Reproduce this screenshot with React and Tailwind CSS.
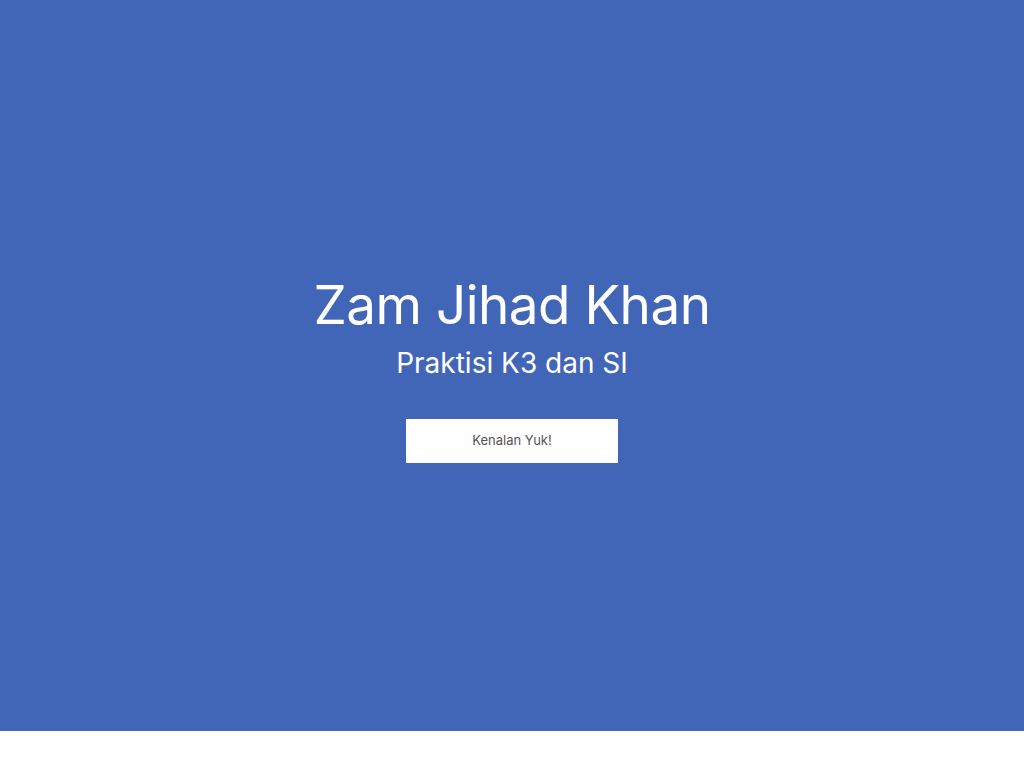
export default function App() {
  return (
    <div className="w-full" style={{ fontFamily: 'Inter, "Noto Sans", sans-serif' }}>
      <section className="h-[731px] pt-[4px] bg-[#4166b8] flex flex-col items-center justify-center text-white">
        <h1 className="text-[53px] leading-[64px] font-normal tracking-[-0.5px]">Zam Jihad Khan</h1>
        <p className="mt-[8px] text-[28px] leading-[36px] font-normal">Praktisi K3 dan SI</p>
        <button className="mt-[38px] w-[212px] h-[44px] bg-white text-[#555] text-[13px]">Kenalan Yuk!</button>
      </section>
      <div className="h-[37px] bg-white" />
    </div>
  );
}
